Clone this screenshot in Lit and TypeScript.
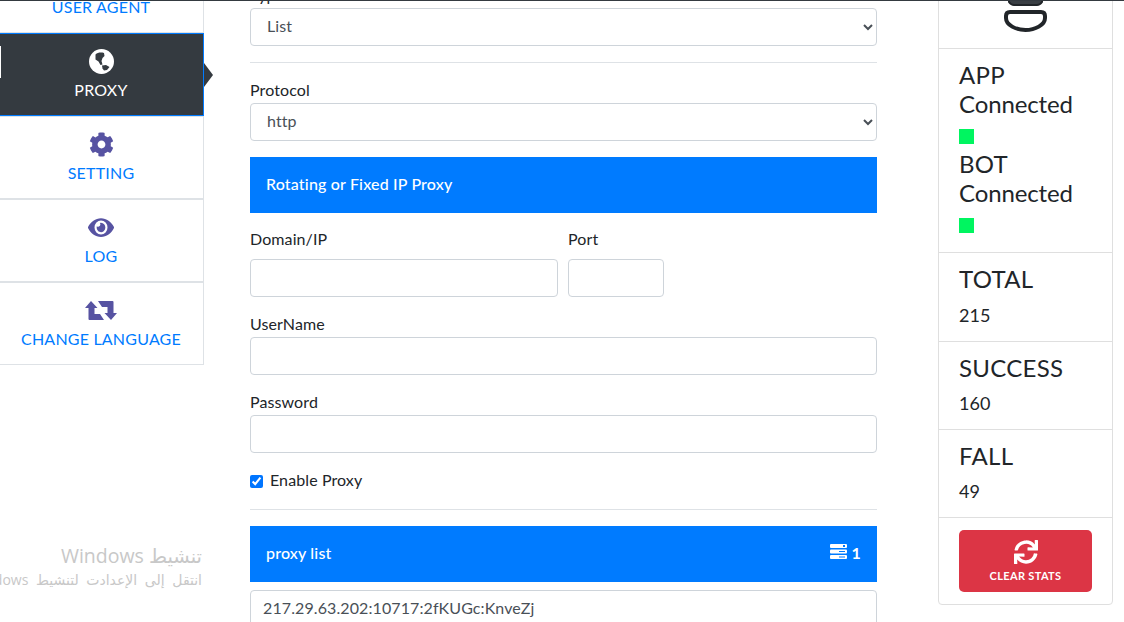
import { LitElement, html, css, svg } from "lit";
import { customElement } from "lit/decorators.js";

const ICONS: Record<string, { vb: string; d: string; w: number; h: number }> = {
  cog: { vb: "0 0 512 512", w: 25, h: 25, d: "M487.4 315.7l-42.6-24.6c4.3-23.2 4.3-47 0-70.2l42.6-24.6c4.9-2.8 7.1-8.6 5.5-14-11.1-35.6-30-67.8-54.7-94.6-3.8-4.1-10-5.1-14.8-2.3L380.8 110c-17.9-15.4-38.5-27.3-60.8-35.1V25.8c0-5.6-3.9-10.5-9.4-11.7-36.7-8.2-74.3-7.8-109.2 0-5.5 1.2-9.4 6.1-9.4 11.7V75c-22.2 7.9-42.8 19.8-60.8 35.1L88.7 85.5c-4.9-2.8-11-1.9-14.8 2.3-24.7 26.7-43.6 58.9-54.7 94.6-1.7 5.4.6 11.2 5.5 14L67.3 221c-4.3 23.2-4.3 47 0 70.2l-42.6 24.6c-4.9 2.8-7.1 8.6-5.5 14 11.1 35.6 30 67.8 54.7 94.6 3.8 4.1 10 5.1 14.8 2.3l42.6-24.6c17.9 15.4 38.5 27.3 60.8 35.1v49.2c0 5.6 3.9 10.5 9.4 11.7 36.7 8.2 74.3 7.8 109.2 0 5.5-1.2 9.4-6.1 9.4-11.7v-49.2c22.2-7.9 42.8-19.8 60.8-35.1l42.6 24.6c4.9 2.8 11 1.9 14.8-2.3 24.7-26.7 43.6-58.9 54.7-94.6 1.5-5.5-.7-11.3-5.6-14.1zM256 336c-44.1 0-80-35.9-80-80s35.9-80 80-80 80 35.9 80 80-35.9 80-80 80z" },
  eye: { vb: "0 0 576 512", w: 26, h: 25, d: "M572.52 241.4C518.29 135.59 410.93 64 288 64S57.68 135.64 3.48 241.41a32.35 32.35 0 0 0 0 29.19C57.71 376.41 165.07 448 288 448s230.32-71.64 284.52-177.41a32.35 32.35 0 0 0 0-29.19zM288 400a144 144 0 1 1 144-144 143.93 143.93 0 0 1-144 144zm0-240a95.31 95.31 0 0 0-25.31 3.79 47.85 47.85 0 0 1-66.9 66.9A95.78 95.78 0 1 0 288 160z" },
  sync: { vb: "0 0 512 512", w: 24, h: 24, d: "M440.65 12.57l4 82.77A247.16 247.16 0 0 0 255.83 8C134.73 8 33.91 94.92 12.29 209.82A12 12 0 0 0 24.09 224h49.05a12 12 0 0 0 11.67-9.26 175.91 175.91 0 0 1 317-56.94l-101.46-4.86a12 12 0 0 0-12.57 12v47.41a12 12 0 0 0 12 12H500a12 12 0 0 0 12-12V12a12 12 0 0 0-12-12h-47.37a12 12 0 0 0-11.98 12.57zM255.83 432a175.61 175.61 0 0 1-146-77.8l101.8 4.87a12 12 0 0 0 12.57-12v-47.4a12 12 0 0 0-12-12H12a12 12 0 0 0-12 12V500a12 12 0 0 0 12 12h47.35a12 12 0 0 0 12-12.6l-4.15-82.57A247.17 247.17 0 0 0 255.83 504c121.11 0 221.93-86.92 243.55-201.82a12 12 0 0 0-11.8-14.18h-49.05a12 12 0 0 0-11.67-9.26A175.86 175.86 0 0 1 255.83 432z" },
};

const icon = (name: string) => {
  const i = ICONS[name];
  return html`<svg class="ic" viewBox=${i.vb} width=${i.w} height=${i.h} preserveAspectRatio="none">${svg`<path d=${i.d}></path>`}</svg>`;
};

const globe = html`<svg class="plain" width="25" height="25" viewBox="0 0 25 25">
  <circle cx="12.5" cy="12.5" r="12.5" fill="#fff"></circle>
  <path fill="#343a40" d="M6.5 5.5C8.5 3.5 12 3 15 4L15.5 7 13.5 9 12.5 12 13.5 15.5 11.5 16 9.5 12.5 6.5 10.5Z"></path>
  <path fill="#343a40" d="M13 16.5 17 16 20.5 18 18 21 15 21.5 13.5 19.5Z"></path>
</svg>`;

const retweet = html`<svg class="plain" width="32" height="19" viewBox="0 0 32 19">
  <path fill="#5753a2" d="M6 0 12.5 7H9.5V13H15L19 19H4.5Q3.5 19 3.5 18V7H0Z"></path>
  <path fill="#5753a2" d="M26 19 19.5 12H22.5V6H17L13 0H27.5Q28.5 0 28.5 1V12H32Z"></path>
</svg>`;

@customElement("app-root")
export class AppRoot extends LitElement {
  static styles = css`
    :host {
      display: block;
      position: relative;
      height: 622px;
      overflow: hidden;
      background: #fff;
      font-family: "Lato", "Noto Sans", sans-serif;
      font-size: 16px;
      line-height: 24px;
      color: #212529;
    }
    .topline { position: absolute; left: 0; right: 0; top: 0; height: 1px; background: #343a40; z-index: 3; }
    .page { display: flex; align-items: flex-start; margin-top: -50px; }

    .side { width: 206px; margin-left: -2px; flex: none; }
    .item {
      position: relative;
      height: 83px;
      box-sizing: border-box;
      border: 1px solid #dee2e6;
      background: #fff;
      display: flex;
      flex-direction: column;
      align-items: center;
      padding-top: 15px;
      color: #007bff;
      letter-spacing: .2px;
    }
    .item .box { height: 25px; display: flex; align-items: center; justify-content: center; margin-bottom: 4px; }
    .item .ic { fill: #5753a2; display: block; }
    .item svg { display: block; }
    .item.active { background: #343a40; color: #fff; border-color: #007bff; }
    .item.active::after {
      content: "";
      position: absolute;
      right: -10px;
      top: 29px;
      border-left: 9px solid #343a40;
      border-top: 12px solid transparent;
      border-bottom: 12px solid transparent;
    }
    .item.active::before {
      content: "";
      position: absolute;
      left: 1px;
      top: 12px;
      width: 1px;
      height: 32px;
      background: #fff;
    }

    .main { width: 627px; margin-left: 46px; padding-top: 34px; flex: none; letter-spacing: .1px; }
    label.lb { display: block; line-height: 22px; margin-bottom: 2px; }
    .row label.lb { line-height: 24px; margin-bottom: 8px; }
    select, input.txt {
      display: block;
      width: 100%;
      height: 38px;
      box-sizing: border-box;
      padding: 4px 12px 8px;
      font: inherit;
      letter-spacing: inherit;
      color: #495057;
      background: #fff;
      border: 1px solid #ced4da;
      border-radius: 4px;
      outline: none;
    }
    hr { margin: 16px 0; border: 0; border-top: 1px solid #dee2e6; height: 0; }
    .bar {
      height: 56px;
      box-sizing: border-box;
      background: #007bff;
      color: #fff;
      padding: 0 16px 2px;
      display: flex;
      align-items: center;
      justify-content: space-between;
      font-weight: 500;
      letter-spacing: .17px;
      margin-top: 16px;
    }
    .bar.nomt { margin-top: 0; }
    .count { display: flex; align-items: center; gap: 5px; font-weight: 700; }
    .count svg { margin-bottom: 4px; }
    .row { display: grid; grid-template-columns: 308px 96px; column-gap: 10px; margin-top: 14px; }
    .grp { margin-top: 16px; }
    .check { display: flex; align-items: center; gap: 7px; margin-top: 16px; height: 24px; }
    .check span { padding-bottom: 2px; }
    .check input { margin: 0; width: 13px; height: 13px; accent-color: #0075ff; }
    .listinput { margin-top: 8px; }

    .card {
      width: 175px;
      box-sizing: border-box;
      margin-left: 61px;
      margin-top: 10px;
      flex: none;
      border: 1px solid #dfdfdf;
      border-radius: 4px;
    }
    .sec { border-bottom: 1px solid #dfdfdf; padding: 12px 20px 0; box-sizing: border-box; }
    .sec:last-child { border-bottom: 0; padding-bottom: 12px; }
    .logo { height: 88px; padding: 0; display: flex; justify-content: center; align-items: flex-end; }
    .logo svg { display: block; margin-bottom: 15px; }
    h4 { margin: 0 0 2px; font-size: 24px; font-weight: 400; line-height: 27px; letter-spacing: .3px; }
    h4.low { letter-spacing: -.13px; }
    .status { height: 204px; }
    .dot { width: 15px; height: 15px; background: #00f560; margin: 12px 0 6px; }
    .stat { height: 88px; }
    .stat.first { height: 89px; }
    .stat p { margin: 10px 0 0; font-size: 18px; }
    .stat.first p { margin-top: 11px; }
    .btn {
      height: 62px;
      border-radius: 5px;
      background: #dc3545;
      color: #fff;
      display: flex;
      flex-direction: column;
      align-items: center;
      padding-top: 10px;
      box-sizing: border-box;
      font-size: 11px;
      font-weight: 700;
      line-height: 16px;
      letter-spacing: .35px;
    }
    .btn .ic { fill: #fff; display: block; margin-bottom: 4px; }

    .watermark {
      position: absolute;
      right: 922px;
      top: 542px;
      white-space: nowrap;
      color: #c8c8c8;
      font-family: "Open Sans", "DejaVu Sans", sans-serif;
      text-align: right;
    }
    .watermark div:first-child { font-size: 19.5px; line-height: 28px; }
    .watermark div:last-child { font-size: 14px; line-height: 20px; word-spacing: 4px; }
  `;

  render() {
    return html`
      <div class="topline"></div>
      <div class="page">
        <nav class="side">
          <div class="item"><div class="box"></div><span>USER AGENT</span></div>
          <div class="item active"><div class="box">${globe}</div><span>PROXY</span></div>
          <div class="item"><div class="box">${icon("cog")}</div><span>SETTING</span></div>
          <div class="item"><div class="box">${icon("eye")}</div><span>LOG</span></div>
          <div class="item"><div class="box">${retweet}</div><span>CHANGE LANGUAGE</span></div>
        </nav>

        <section class="main">
          <label class="lb">Type</label>
          <select><option>List</option></select>
          <hr />
          <label class="lb">Protocol</label>
          <select><option>http</option></select>
          <div class="bar">Rotating or Fixed IP Proxy</div>
          <div class="row">
            <div><label class="lb">Domain/IP</label><input class="txt" /></div>
            <div><label class="lb">Port</label><input class="txt" /></div>
          </div>
          <div class="grp"><label class="lb">UserName</label><input class="txt" /></div>
          <div class="grp"><label class="lb">Password</label><input class="txt" /></div>
          <div class="check"><input type="checkbox" checked /><span>Enable Proxy</span></div>
          <hr />
          <div class="bar nomt">
            <span>proxy list</span>
            <span class="count">
              <svg width="17" height="15" viewBox="0 0 17 15">
                <rect x="0" y="0" width="17" height="4" rx="1" fill="#fff"></rect>
                <rect x="13" y="1" width="2" height="2" fill="#007bff"></rect>
                <rect x="0" y="5.5" width="17" height="4" rx="1" fill="#fff"></rect>
                <rect x="9" y="7" width="6" height="1" fill="#007bff"></rect>
                <rect x="0" y="11" width="17" height="4" rx="1" fill="#fff"></rect>
                <rect x="9" y="12.5" width="6" height="1" fill="#007bff"></rect>
              </svg>
              1
            </span>
          </div>
          <input class="txt listinput" value="217.29.63.202:10717:2fKUGc:KnveZj" />
        </section>

        <aside class="card">
          <div class="sec logo">
            <svg width="45" height="52" viewBox="0 0 45 52" fill="none" stroke="#212529" stroke-width="4">
              <path d="M6 18V21Q8 24 11 24H34Q37 24 39 21V18Z" fill="#3a3f44" stroke-width="2"></path>
              <path d="M7 31H38Q42 31 42 35V37C42 44 32 49 22.5 49C13 49 3 44 3 37V35Q3 31 7 31Z"></path>
            </svg>
          </div>
          <div class="sec status">
            <h4>APP</h4>
            <h4 class="low">Connected</h4>
            <div class="dot"></div>
            <h4>BOT</h4>
            <h4 class="low">Connected</h4>
            <div class="dot"></div>
          </div>
          <div class="sec stat first"><h4>TOTAL</h4><p>215</p></div>
          <div class="sec stat"><h4>SUCCESS</h4><p>160</p></div>
          <div class="sec stat"><h4>FALL</h4><p>49</p></div>
          <div class="sec">
            <div class="btn">${icon("sync")}<span>CLEAR STATS</span></div>
          </div>
        </aside>
      </div>
      <div class="watermark">
        <div dir="rtl">تنشيط Windows</div>
        <div dir="rtl">انتقل إلى الإعدادت لتنشيط Windows</div>
      </div>
    `;
  }
}
